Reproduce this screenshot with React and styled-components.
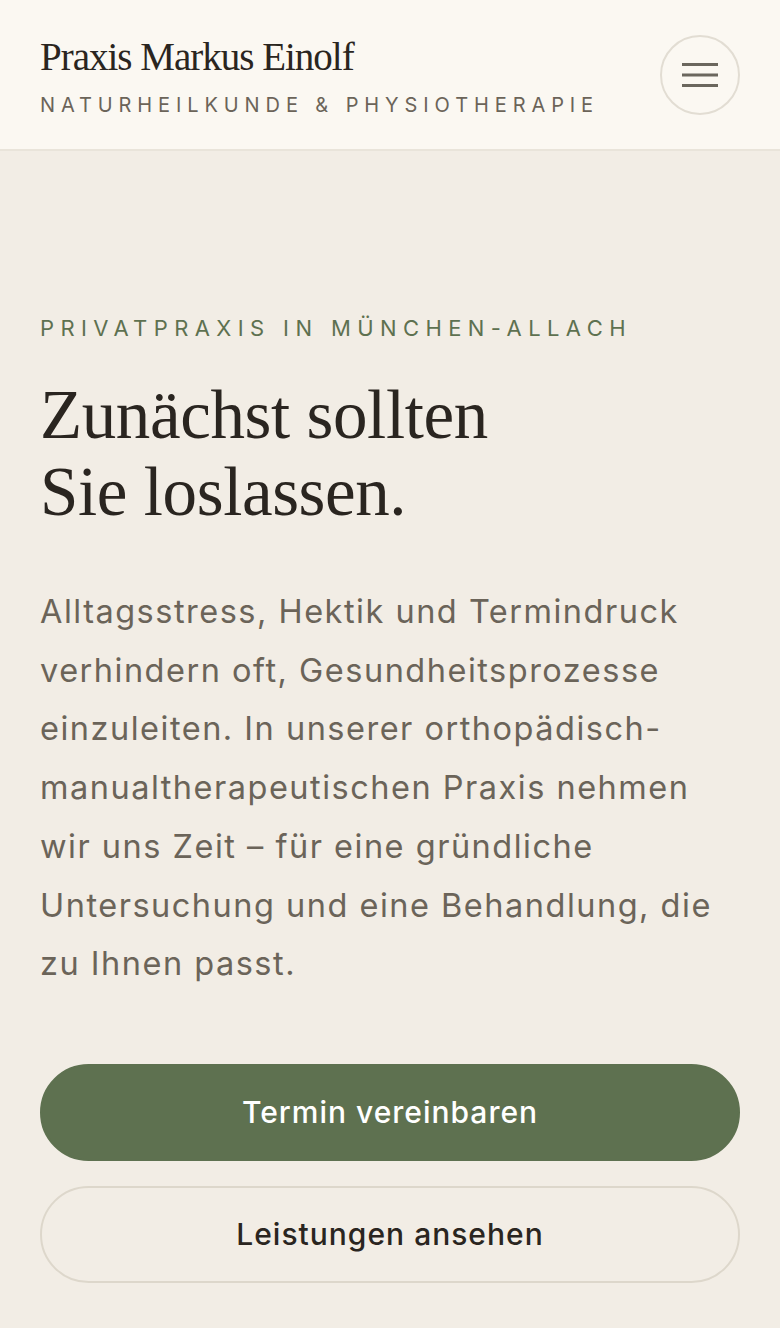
import React from 'react';
import styled, { createGlobalStyle } from 'styled-components';

const GlobalStyle = createGlobalStyle`
  * { box-sizing: border-box; }
  body {
    margin: 0;
    background: #f2ede5;
    font-family: Inter, "Noto Sans", sans-serif;
  }
`;

const Page = styled.div`
  min-height: 1328px;
  background: #f2ede5;
`;

const Header = styled.header`
  display: flex;
  align-items: center;
  justify-content: space-between;
  height: 151px;
  padding: 0 40px;
  background: #fbf8f2;
  border-bottom: 2px solid #e9e4da;
`;

const Brand = styled.div`
  display: flex;
  flex-direction: column;
  gap: 17px;
  padding-top: 4px;
`;

const BrandName = styled.div`
  font-family: "Liberation Serif", serif;
  font-size: 39px;
  line-height: 1;
  color: #2a2520;
  letter-spacing: -1px;
`;

const BrandTag = styled.div`
  font-family: Inter, sans-serif;
  font-size: 20px;
  letter-spacing: 5.9px;
  color: #6b6459;
  text-transform: uppercase;
`;

const MenuButton = styled.button`
  width: 80px;
  height: 80px;
  border-radius: 50%;
  border: 2px solid #e2ddd3;
  background: transparent;
  display: flex;
  align-items: center;
  justify-content: center;
  padding: 0;
  cursor: pointer;
`;

const Hero = styled.main`
  padding: 164px 40px 40px;
`;

const Eyebrow = styled.div`
  font-size: 22px;
  letter-spacing: 6.4px;
  color: #5e7150;
  text-transform: uppercase;
`;

const Title = styled.h1`
  margin: 36px 0 0;
  font-family: "Liberation Serif", serif;
  font-weight: 400;
  font-size: 69px;
  line-height: 77px;
  color: #2a2520;
  letter-spacing: -0.4px;
`;

const Lead = styled.p`
  margin: 52px 0 0;
  font-size: 32.5px;
  line-height: 58.7px;
  letter-spacing: 1.5px;
  color: #6b6459;
`;

const Actions = styled.div`
  display: flex;
  flex-direction: column;
  gap: 25px;
  margin-top: 70px;
`;

const Button = styled.button`
  width: 100%;
  height: 97px;
  border-radius: 49px;
  font-family: Inter, sans-serif;
  font-size: 30px;
  font-weight: 500;
  letter-spacing: 1px;
  cursor: pointer;
  background: ${p => (p.$primary ? '#5e7150' : 'transparent')};
  color: ${p => (p.$primary ? '#ffffff' : '#2a2520')};
  border: 2px solid ${p => (p.$primary ? '#5e7150' : '#ddd7cb')};
`;

function MenuIcon() {
  return (
    <svg width="38" height="26" viewBox="0 0 38 26">
      <g stroke="#6b675e" strokeWidth="3">
        <line x1="1" y1="2.5" x2="37" y2="2.5" />
        <line x1="1" y1="13" x2="37" y2="13" />
        <line x1="1" y1="23.5" x2="37" y2="23.5" />
      </g>
    </svg>
  );
}

export default function App() {
  return (
    <Page>
      <GlobalStyle />
      <Header>
        <Brand>
          <BrandName>Praxis Markus Einolf</BrandName>
          <BrandTag>Naturheilkunde &amp; Physiotherapie</BrandTag>
        </Brand>
        <MenuButton aria-label="Menü">
          <MenuIcon />
        </MenuButton>
      </Header>
      <Hero>
        <Eyebrow>Privatpraxis in München-Allach</Eyebrow>
        <Title>
          Zunächst sollten
          <br />
          Sie loslassen.
        </Title>
        <Lead>
          Alltagsstress, Hektik und Termindruck verhindern oft, Gesundheitsprozesse
          einzuleiten. In unserer orthopädisch-manualtherapeutischen Praxis nehmen
          wir uns Zeit – für eine gründliche Untersuchung und eine Behandlung, die
          zu Ihnen passt.
        </Lead>
        <Actions>
          <Button $primary>Termin vereinbaren</Button>
          <Button>Leistungen ansehen</Button>
        </Actions>
      </Hero>
    </Page>
  );
}
